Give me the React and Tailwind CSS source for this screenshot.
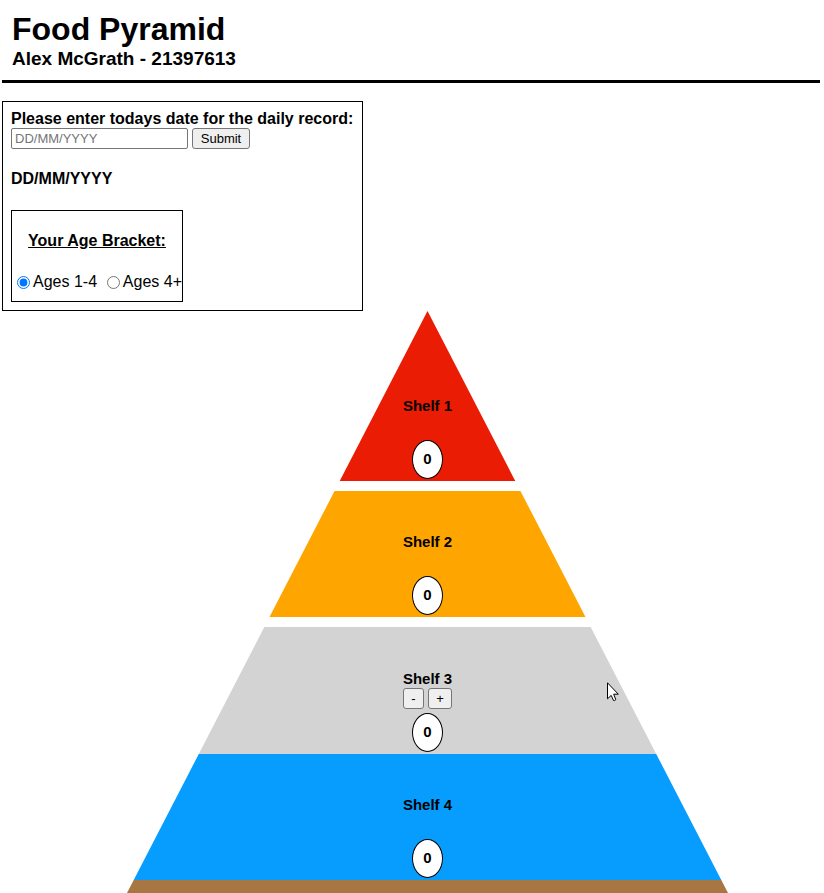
import { useState } from "react";

const buttonClass =
  "h-[21px] rounded-[3px] border border-[#767676] bg-[#efefef] text-center text-[13px] leading-[15px] text-black";

const shelves = [
  { name: "Shelf 1", shape: "h-[170px] mb-[10px] bg-[#ea1c04]" },
  { name: "Shelf 2", shape: "h-[126px] mb-[10px] bg-[#ffa500]" },
  { name: "Shelf 3", shape: "h-[127px] bg-[#d3d3d3]", active: true },
  { name: "Shelf 4", shape: "h-[126px] bg-[#069dff]" },
];

function Shelf({ name, shape, active }) {
  const [count, setCount] = useState(0);
  return (
    <section className={"flex flex-col items-center justify-end pb-[2px] " + shape}>
      <h2 className="text-[15px] font-bold leading-[18px]">{name}</h2>
      <div className="mb-1 flex h-[21px] gap-1">
        {active && (
          <>
            <button
              type="button"
              className={buttonClass + " w-[21px]"}
              onClick={() => setCount(Math.max(0, count - 1))}
            >
              -
            </button>
            <button
              type="button"
              className={buttonClass + " w-6"}
              onClick={() => setCount(count + 1)}
            >
              +
            </button>
          </>
        )}
      </div>
      <output className="flex h-[39px] w-[31px] items-center justify-center rounded-[50%] border border-black bg-white text-[15px] font-bold">
        {count}
      </output>
    </section>
  );
}

export default function App() {
  const [draft, setDraft] = useState("");
  const [date, setDate] = useState("DD/MM/YYYY");

  return (
    <div className="bg-white pl-[2px] pr-1 font-['Liberation_Sans',Arial,sans-serif] text-base text-black">
      <header className="border-b-[3px] border-black px-[10px] pb-[10px] pt-[11px]">
        <h1 className="text-[32px] font-bold leading-9">Food Pyramid</h1>
        <p className="text-[19px] font-bold leading-[23px]">Alex McGrath - 21397613</p>
      </header>

      <main>
        <div className="mt-[18px] w-fit border border-black py-2 pl-2 pr-[9px]">
          <form
            className="font-bold"
            onSubmit={(event) => {
              event.preventDefault();
              setDate(draft || "DD/MM/YYYY");
            }}
          >
            <label htmlFor="date" className="block leading-[18px]">
              Please enter todays date for the daily record:
            </label>
            <div className="flex gap-1">
              <input
                id="date"
                type="text"
                placeholder="DD/MM/YYYY"
                value={draft}
                onChange={(event) => setDraft(event.target.value)}
                className="h-[21px] w-[177px] rounded-[2px] border border-[#767676] bg-white px-[3px] text-[13px] font-normal placeholder:text-[#757575]"
              />
              <button type="submit" className={buttonClass + " w-[58px] font-normal"}>
                Submit
              </button>
            </div>
          </form>
          <p className="mt-[21px] font-bold leading-[18px]">{date}</p>
          <fieldset className="mt-[22px] w-[172px] border border-black pb-[10px] pt-[21px]">
            <h2 className="text-center font-bold leading-[18px] underline">Your Age Bracket:</h2>
            <div className="mt-[23px] flex justify-between whitespace-nowrap pl-[5px] leading-[18px]">
              <label className="flex items-center gap-[3px]">
                <input type="radio" name="age" defaultChecked className="h-[13px] w-[13px]" />
                Ages 1-4
              </label>
              <label className="flex items-center gap-[3px]">
                <input type="radio" name="age" className="h-[13px] w-[13px]" />
                Ages 4+
              </label>
            </div>
          </fieldset>
        </div>

        <div className="flex justify-center pl-[33px]">
          <div className="relative w-[601px] [clip-path:polygon(50%_0,100%_100%,0_100%)]">
            {shelves.map((shelf) => (
              <Shelf key={shelf.name} {...shelf} />
            ))}
            <div className="h-[13px] bg-[#a87642]" />
            <svg
              className="absolute left-[480px] top-[371px] h-5 w-3"
              viewBox="0 0 12 20"
              aria-hidden="true"
            >
              <path
                d="M.5 .8V16.8L4.2 13.4L6.5 18.5Q7.6 19 8.8 17.7L6.7 12.2H11.3Z"
                fill="white"
                stroke="black"
                strokeWidth="1"
              />
            </svg>
          </div>
        </div>
      </main>
    </div>
  );
}
